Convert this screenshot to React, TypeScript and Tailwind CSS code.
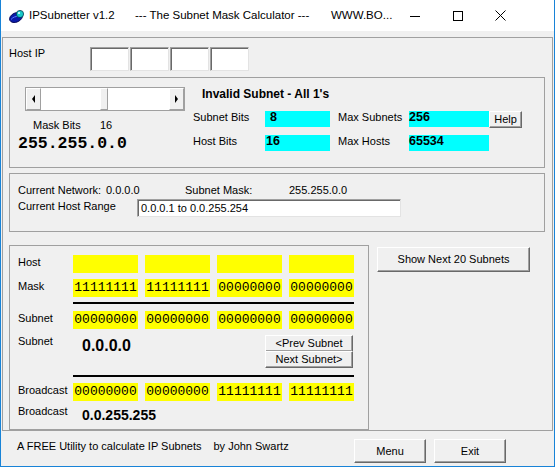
import React from 'react'

const btn =
  'flex items-center justify-center bg-[#f0f0f0] border border-t-white border-l-white border-r-[#696969] border-b-[#696969] shadow-[inset_-1px_-1px_0_#a0a0a0] text-[11px] leading-none text-black'

const sunken =
  'bg-white border border-t-[#a0a0a0] border-l-[#a0a0a0] border-r-[#e3e3e3] border-b-[#e3e3e3] shadow-[inset_1px_1px_0_#696969]'

function TitleBar() {
  return (
    <div className="h-[31px] flex items-center bg-white text-[11.5px] text-black">
      <svg width="16" height="16" viewBox="0 0 16 16" className="ml-[8px]">
        <ellipse cx="7" cy="9.5" rx="6.8" ry="4.6" transform="rotate(-25 7 9.5)" fill="#0a1aa8" stroke="#000050" strokeWidth="0.8" />
        <path d="M2 11.5 C4 9 7 8 10 8.5" stroke="#5a7cff" strokeWidth="1" fill="none" />
        <circle cx="11" cy="6" r="3.6" fill="#18c8c8" stroke="#003a50" strokeWidth="0.8" />
        <circle cx="10" cy="5" r="1.1" fill="#e8ffff" />
      </svg>
      <span className="ml-[4px] w-[106px]">IPSubnetter v1.2</span>
      <span className="w-[196px]">--- The Subnet Mask Calculator ---</span>
      <span>WWW.BO...</span>
      <div className="ml-auto mr-[32px] flex h-full">
        <div className="w-[43px] flex items-center justify-center">
          <svg width="10" height="10" viewBox="0 0 10 10"><path d="M0 5.5 H10" stroke="#000" strokeWidth="1" /></svg>
        </div>
        <div className="w-[43px] flex items-center justify-center">
          <svg width="10" height="10" viewBox="0 0 10 10"><rect x="0.5" y="0.5" width="9" height="9" stroke="#000" strokeWidth="1" fill="none" /></svg>
        </div>
        <div className="w-[43px] flex items-center justify-center">
          <svg width="11" height="11" viewBox="0 0 11 11"><path d="M0.5 0.5 L10.5 10.5 M10.5 0.5 L0.5 10.5" stroke="#000" strokeWidth="1" /></svg>
        </div>
      </div>
    </div>
  )
}

function ScrollBar() {
  return (
    <div className="w-[160px] h-[24px] flex border border-[#a0a0a0] bg-white">
      <div className="w-[15px] h-full flex items-center justify-center bg-[#f0f0f0] border border-t-white border-l-white border-r-[#a0a0a0] border-b-[#a0a0a0]">
        <div className="w-0 h-0 border-y-[4px] border-y-transparent border-r-[3px] border-r-black" />
      </div>
      <div className="flex-1 flex">
        <div className="w-[59px]" />
        <div className="w-[8px] h-full bg-[#f0f0f0] border border-t-white border-l-white border-r-[#a0a0a0] border-b-[#a0a0a0]" />
      </div>
      <div className="w-[15px] h-full flex items-center justify-center bg-[#f0f0f0] border border-t-white border-l-white border-r-[#a0a0a0] border-b-[#a0a0a0]">
        <div className="w-0 h-0 border-y-[4px] border-y-transparent border-l-[3px] border-l-black" />
      </div>
    </div>
  )
}

function CyanField({ value, w, pad }: { value: string; w: string; pad: string }) {
  return (
    <div className={`${w} ${pad} h-[16px] bg-[#00ffff] font-bold text-[12.5px] leading-[13px]`}>{value}</div>
  )
}

function BitRow({ label, values }: { label: string; values: string[] }) {
  return (
    <div className="flex items-start w-[336px] h-[18px]">
      <span className="w-[55px] mt-[1px]">{label}</span>
      <div className="flex gap-[7px]">
        {values.map((v, i) => (
          <div
            key={i}
            className="w-[65px] h-[18px] bg-[#ffff00] flex justify-center font-['Liberation_Mono',monospace] text-[13px] leading-[15px] pt-[1px]"
          >
            {v}
          </div>
        ))}
      </div>
    </div>
  )
}

export default function App() {
  return (
    <div className="w-[555px] h-[467px] flex flex-col border-x border-b border-[#1883d7] bg-white font-['Liberation_Sans',Arial,sans-serif] text-black overflow-hidden">
      <TitleBar />
      <div className="flex-1 flex flex-col bg-[#f0f0f0] text-[11px] leading-[13px]">
        <div className="mt-[6px] mx-px h-[394px] border border-[#a0a0a0] pl-[6px] pt-[9px] flex flex-col">
          {/* Host IP */}
          <div className="flex items-start h-[24px]">
            <span className="w-[81px]">Host IP</span>
            <div className="flex gap-[1px]">
              <div className={`w-[39px] h-[24px] ${sunken}`} />
              <div className={`w-[39px] h-[24px] ${sunken}`} />
              <div className={`w-[39px] h-[24px] ${sunken}`} />
              <div className={`w-[39px] h-[24px] ${sunken}`} />
            </div>
          </div>

          {/* Mask group */}
          <div className="mt-[6px] w-[536px] h-[91px] border border-[#a0a0a0] flex">
            <div className="w-[183px] flex flex-col pt-[9px]">
              <div className="ml-[15px]">
                <ScrollBar />
              </div>
              <div className="mt-[8px] ml-[23px] flex">
                <span className="w-[67px]">Mask Bits</span>
                <span>16</span>
              </div>
              <div className="mt-[2px] ml-[8px] font-['Liberation_Mono',monospace] font-bold text-[16.5px] leading-[19px]">
                255.255.0.0
              </div>
            </div>
            <div className="flex flex-col">
              <div className="mt-[9px] ml-[9px] font-bold text-[12px] leading-[14px]">Invalid Subnet - All 1's</div>
              <div className="mt-[10px] flex items-start h-[16px]">
                <span className="w-[72px]">Subnet Bits</span>
                <CyanField value="8" w="w-[65px]" pad="pl-[5px]" />
                <span className="w-[8px]" />
                <span className="w-[71px]">Max Subnets</span>
                <CyanField value="256" w="w-[80px]" pad="pl-0" />
                <button className={`${btn} w-[33px] h-[17px] text-[11.5px]`}>Help</button>
              </div>
              <div className="mt-[8px] flex items-start h-[16px]">
                <span className="w-[72px]">Host Bits</span>
                <CyanField value="16" w="w-[65px]" pad="pl-[1px]" />
                <span className="w-[8px]" />
                <span className="w-[71px]">Max Hosts</span>
                <CyanField value="65534" w="w-[80px]" pad="pl-0" />
              </div>
            </div>
          </div>

          {/* Network group */}
          <div className="mt-[5px] w-[536px] h-[59px] border border-[#a0a0a0] pl-[8px] pt-[10px] flex flex-col">
            <div className="flex">
              <span className="w-[88px]">Current Network:</span>
              <span className="w-[79px]">0.0.0.0</span>
              <span className="w-[104px]">Subnet Mask:</span>
              <span>255.255.0.0</span>
            </div>
            <div className="mt-[2px] flex items-start">
              <span className="w-[119px] mt-[1px]">Current Host Range</span>
              <div className={`w-[264px] h-[18px] ${sunken} pl-[3px] pt-[2px]`}>0.0.0.1 to 0.0.255.254</div>
            </div>
          </div>

          {/* Binary group + side button */}
          <div className="mt-[13px] flex items-start gap-[8px]">
            <div className="w-[360px] h-[185px] border border-[#a0a0a0] pl-[8px] pt-[9px] flex flex-col">
              <BitRow label="Host" values={['', '', '', '']} />
              <div className="mt-[6px]">
                <BitRow label="Mask" values={['11111111', '11111111', '00000000', '00000000']} />
              </div>
              <div className="mt-[5px] ml-[55px] w-[281px] h-[2px] bg-black" />
              <div className="mt-[7px]">
                <BitRow label="Subnet" values={['00000000', '00000000', '00000000', '00000000']} />
              </div>
              <div className="mt-[6px] w-[336px] flex items-start h-[33px]">
                <span className="w-[64px]">Subnet</span>
                <span className="mt-[1px] font-bold text-[16px] leading-[19px]">0.0.0.0</span>
                <div className="ml-auto mr-[1px] flex flex-col">
                  <button className={`${btn} w-[88px] h-[17px]`}>&lt;Prev Subnet</button>
                  <button className={`${btn} w-[88px] h-[17px] -mt-[1px]`}>Next Subnet&gt;</button>
                </div>
              </div>
              <div className="mt-[7px] ml-[55px] w-[281px] h-[2px] bg-black" />
              <div className="mt-[6px]">
                <BitRow label="Broadcast" values={['00000000', '00000000', '11111111', '11111111']} />
              </div>
              <div className="mt-[4px] flex items-start">
                <span className="w-[64px]">Broadcast</span>
                <span className="mt-[2px] font-bold text-[14px] leading-[17px]">0.0.255.255</span>
              </div>
            </div>
            <button className={`${btn} mt-[2px] w-[153px] h-[25px]`}>Show Next 20 Subnets</button>
          </div>
        </div>

        {/* Footer */}
        <div className="h-[35px] flex items-start">
          <span className="ml-[16px] mt-[9px]">A FREE Utility to calculate IP Subnets</span>
          <span className="ml-[12px] mt-[9px]">by John Swartz</span>
          <div className="ml-auto mr-[48px] mt-[8px] flex gap-[8px]">
            <button className={`${btn} w-[72px] h-[24px]`}>Menu</button>
            <button className={`${btn} w-[72px] h-[24px]`}>Exit</button>
          </div>
        </div>
      </div>
    </div>
  )
}
